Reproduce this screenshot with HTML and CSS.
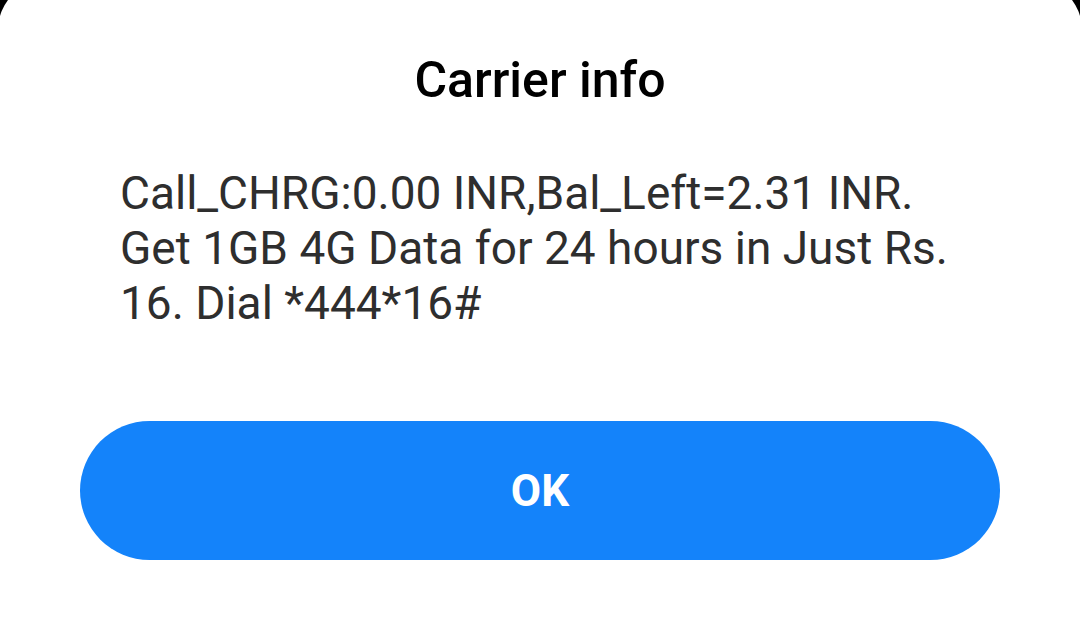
FILE: index.html
```html
<!DOCTYPE html>
<html lang="en">
<head>
  <meta charset="UTF-8">
  <title>Carrier info</title>
  <link rel="stylesheet" href="styles.css">
</head>
<body>

  <div class="dialog">
    <h2 class="dialog-title">Carrier info</h2>
    <p class="dialog-message">Call_CHRG:0.00 INR,Bal_Left=2.31 INR. Get 1GB 4G Data for 24 hours in Just Rs. 16. Dial *444*16#</p>
    <button class="dialog-ok" type="button">OK</button>
  </div>

</body>
</html>
```

FILE: styles.css
```css
* {
  margin: 0;
  padding: 0;
  box-sizing: border-box;
  font-family: 'Roboto', 'Liberation Sans', sans-serif;
}

body {
  background: #000;
  height: 100vh;
  overflow: hidden;
}

.dialog {
  background: #fff;
  width: 1084px;
  height: calc(100vh + 20px);
  margin: -20px 0 0 -2px;
  padding: 70px 82px 0;
  border-radius: 50px 50px 0 0;
}

.dialog-title {
  font-size: 50px;
  line-height: 60px;
  font-weight: 500;
  color: #000;
  text-align: center;
}

.dialog-message {
  margin: 56px 40px 0;
  font-size: 46px;
  line-height: 55px;
  color: #2e2e2e;
}

.dialog-ok {
  display: block;
  width: 100%;
  height: 139px;
  margin-top: 90px;
  border: none;
  border-radius: 70px;
  background: #1483fa;
  color: #fff;
  font-size: 44px;
  font-weight: 700;
}
```
